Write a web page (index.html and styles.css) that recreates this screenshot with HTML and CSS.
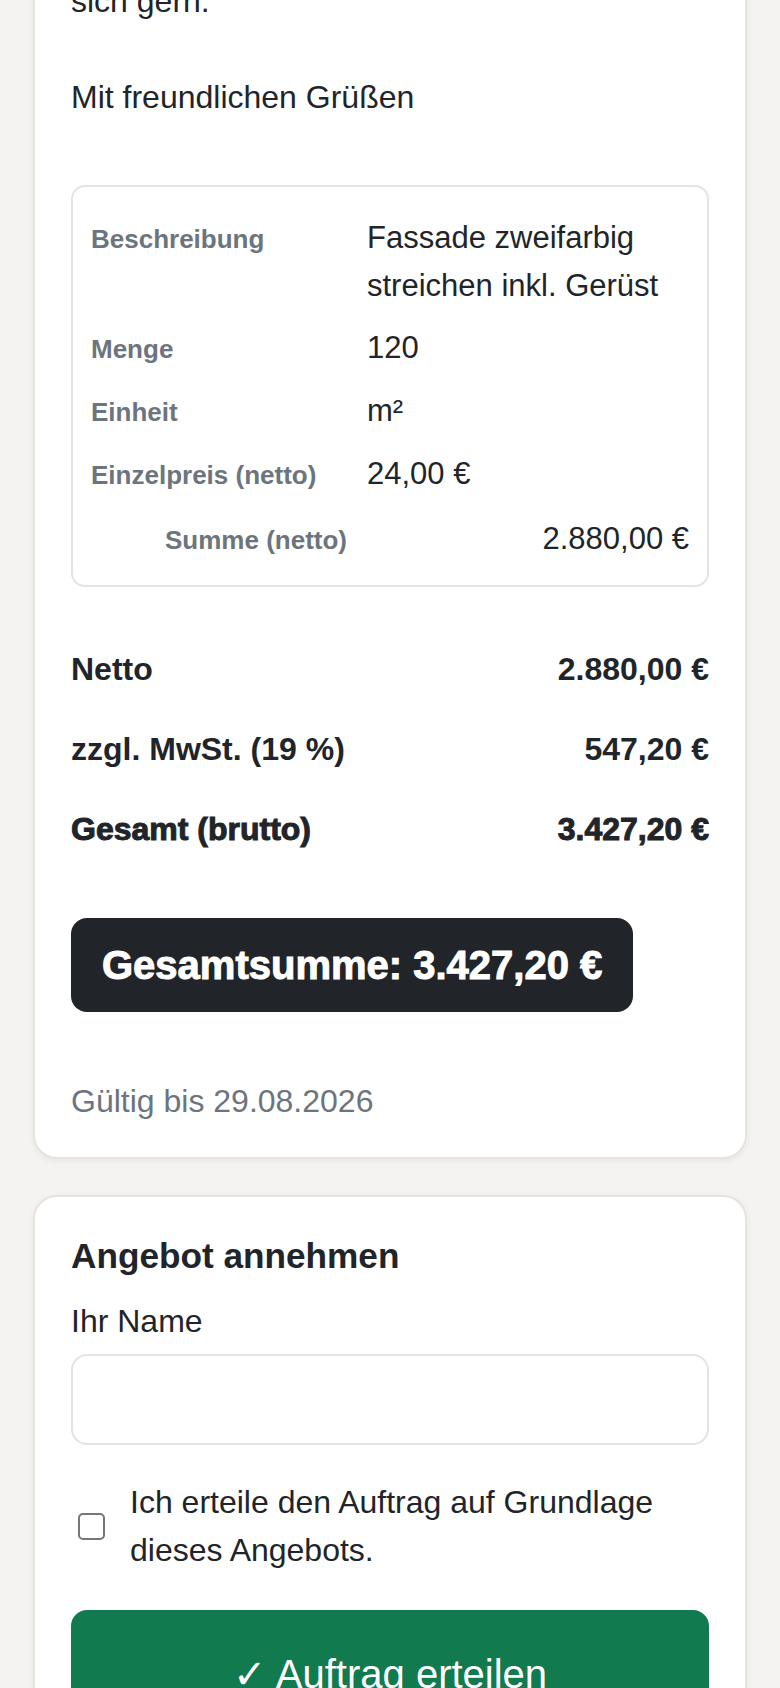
FILE: index.html
```html
<!DOCTYPE html>
<html lang="de">
<head>
  <meta charset="UTF-8">
  <meta name="viewport" content="width=device-width, initial-scale=1.0">
  <title>Angebot</title>
  <link rel="stylesheet" href="styles.css">
</head>
<body>
  <main class="seite">

    <section class="karte angebot">
      <p class="brief">Sehr geehrte Damen und Herren,

vielen Dank für Ihre Anfrage.
Anbei erhalten Sie unser Angebot.
Bei Rückfragen melden Sie
sich gern.

Mit freundlichen Grüßen</p>

      <div class="posten">
        <table>
          <tr>
            <td class="lbl">Beschreibung</td>
            <td>Fassade zweifarbig streichen inkl. Gerüst</td>
          </tr>
          <tr>
            <td class="lbl">Menge</td>
            <td>120</td>
          </tr>
          <tr>
            <td class="lbl">Einheit</td>
            <td>m²</td>
          </tr>
          <tr>
            <td class="lbl">Einzelpreis (netto)</td>
            <td>24,00 €</td>
          </tr>
          <tr class="summe">
            <td class="lbl">Summe (netto)</td>
            <td>2.880,00 €</td>
          </tr>
        </table>
      </div>

      <div class="summen">
        <div class="zeile">
          <span>Netto</span>
          <span>2.880,00 €</span>
        </div>
        <div class="zeile">
          <span>zzgl. MwSt. (19 %)</span>
          <span>547,20 €</span>
        </div>
        <div class="zeile gesamt">
          <span>Gesamt (brutto)</span>
          <span>3.427,20 €</span>
        </div>
      </div>

      <div class="badge">Gesamtsumme: 3.427,20 €</div>

      <p class="gueltig">Gültig bis 29.08.2026</p>
    </section>

    <section class="karte annehmen">
      <h2>Angebot annehmen</h2>

      <label class="feld-lbl" for="name">Ihr Name</label>
      <input class="feld" type="text" id="name">

      <div class="check">
        <input type="checkbox" id="ok">
        <label for="ok">Ich erteile den Auftrag auf Grundlage dieses Angebots.</label>
      </div>

      <button class="btn" type="button">✓ Auftrag erteilen</button>
    </section>

  </main>
</body>
</html>
```

FILE: styles.css
```css
body{
  margin: 0;
  background-color: #f4f3f1;
  color: #212529;
  font-family: "Liberation Sans", Arial, sans-serif;
  font-size: 32px;
  line-height: 1.5;
}
.seite{
  padding: 0 33px 40px;
}
.karte{
  background-color: white;
  border: 2px solid #e7e3dd;
  border-radius: 24px;
  box-shadow: 0 2px 6px rgba(0, 0, 0, 0.06);
  padding: 36px 36px 32px;
}
.angebot{
  margin-top: -301px;
}
.annehmen{
  margin-top: 36px;
}
.brief{
  white-space: pre-line;
  margin: 0 0 64px;
}

.posten{
  border: 2px solid #e7e3dd;
  border-radius: 14px;
  padding: 20px 18px 14px;
}
.posten table{
  width: 100%;
  border-collapse: collapse;
}
.posten td{
  padding: 7px 0;
  font-size: 31px;
  line-height: 48px;
  vertical-align: baseline;
}
.posten .lbl{
  width: 276px;
  padding-right: 20px;
  box-sizing: border-box;
  color: #6c757d;
  font-size: 26px;
  font-weight: bold;
}
.summe td{
  padding-top: 9px;
  text-align: right;
}

.summen{
  margin-top: 42px;
}
.zeile{
  display: flex;
  justify-content: space-between;
  padding: 16px 0;
  font-weight: bold;
}
.gesamt{
  -webkit-text-stroke: 1px #212529;
}

.badge{
  display: inline-block;
  margin-top: 49px;
  background-color: #212529;
  color: white;
  border-radius: 16px;
  padding: 23px 31px;
  font-size: 40px;
  line-height: 48px;
  font-weight: bold;
  -webkit-text-stroke: 1px white;
}
.gueltig{
  margin: 65px 0 0;
  color: #6c757d;
}

h2{
  margin: 2px 0 20px;
  font-size: 35.2px;
  line-height: 1.2;
}
.feld-lbl{
  display: block;
}
.feld{
  display: block;
  width: 100%;
  height: 91px;
  box-sizing: border-box;
  margin-top: 9px;
  border: 2px solid #e7e3dd;
  border-radius: 16px;
  padding: 0 24px;
  font: inherit;
}
.check{
  display: flex;
  align-items: center;
  gap: 25px;
  margin-top: 33px;
}
.check input{
  appearance: none;
  flex: none;
  width: 27px;
  height: 27px;
  margin: 0 0 0 7px;
  border: 2px solid #767676;
  border-radius: 5px;
  background-color: white;
}
.btn{
  display: block;
  width: 100%;
  margin-top: 36px;
  background-color: #127a4f;
  color: white;
  border: none;
  border-radius: 16px;
  padding: 34px 0;
  font-family: inherit;
  font-size: 40px;
  line-height: 60px;
}
```
